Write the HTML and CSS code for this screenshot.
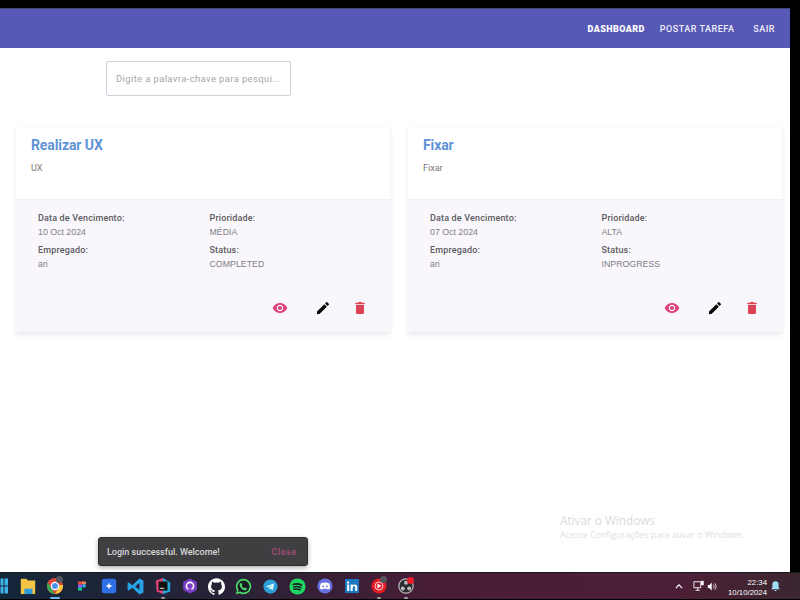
FILE: index.html
```html
<!DOCTYPE html>
<html lang="pt">
<head>
<meta charset="utf-8">
<title>Dashboard</title>
<link rel="stylesheet" href="styles.css">
</head>
<body>
<div class="window">
  <header class="navbar">
    <a class="nav-link nav-strong">DASHBOARD</a>
    <a class="nav-link">POSTAR TAREFA</a>
    <a class="nav-link">SAIR</a>
  </header>
  <main class="content">
    <div class="search"><span class="placeholder">Digite a palavra-chave para pesqui...</span></div>
    <section class="cards">
      <article class="card">
        <div class="card-head"><h2 class="card-title">Realizar UX</h2><p class="card-desc">UX</p></div>
        <div class="card-body">
          <dl class="meta">
            <div><dt>Data de Vencimento:</dt><dd>10 Oct 2024</dd></div>
            <div><dt>Prioridade:</dt><dd>MÉDIA</dd></div>
            <div><dt>Empregado:</dt><dd>ari</dd></div>
            <div><dt>Status:</dt><dd>COMPLETED</dd></div>
          </dl>
          <div class="actions">
            <svg class="icon icon-view" viewBox="0 0 24 24"><path d="M12 4.5C7 4.5 2.73 7.61 1 12c1.73 4.39 6 7.5 11 7.5s9.27-3.11 11-7.5c-1.73-4.39-6-7.5-11-7.5zM12 17c-2.76 0-5-2.24-5-5s2.24-5 5-5 5 2.24 5 5-2.24 5-5 5zm0-8c-1.66 0-3 1.34-3 3s1.34 3 3 3 3-1.34 3-3-1.34-3-3-3z"/></svg>
            <svg class="icon icon-edit" viewBox="0 0 24 24"><path d="M3 17.25V21h3.75L17.81 9.94l-3.75-3.75L3 17.25zM20.71 7.04c.39-.39.39-1.02 0-1.41l-2.34-2.34a.9959.9959 0 0 0-1.41 0l-1.83 1.83 3.75 3.75 1.83-1.83z"/></svg>
            <svg class="icon icon-del" viewBox="0 0 24 24"><path d="M6 19c0 1.1.9 2 2 2h8c1.1 0 2-.9 2-2V7H6v12zM19 4h-3.5l-1-1h-5l-1 1H5v2h14V4z"/></svg>
          </div>
        </div>
      </article>
      <article class="card">
        <div class="card-head"><h2 class="card-title">Fixar</h2><p class="card-desc">Fixar</p></div>
        <div class="card-body">
          <dl class="meta">
            <div><dt>Data de Vencimento:</dt><dd>07 Oct 2024</dd></div>
            <div><dt>Prioridade:</dt><dd>ALTA</dd></div>
            <div><dt>Empregado:</dt><dd>ari</dd></div>
            <div><dt>Status:</dt><dd>INPROGRESS</dd></div>
          </dl>
          <div class="actions">
            <svg class="icon icon-view" viewBox="0 0 24 24"><path d="M12 4.5C7 4.5 2.73 7.61 1 12c1.73 4.39 6 7.5 11 7.5s9.27-3.11 11-7.5c-1.73-4.39-6-7.5-11-7.5zM12 17c-2.76 0-5-2.24-5-5s2.24-5 5-5 5 2.24 5 5-2.24 5-5 5zm0-8c-1.66 0-3 1.34-3 3s1.34 3 3 3 3-1.34 3-3-1.34-3-3-3z"/></svg>
            <svg class="icon icon-edit" viewBox="0 0 24 24"><path d="M3 17.25V21h3.75L17.81 9.94l-3.75-3.75L3 17.25zM20.71 7.04c.39-.39.39-1.02 0-1.41l-2.34-2.34a.9959.9959 0 0 0-1.41 0l-1.83 1.83 3.75 3.75 1.83-1.83z"/></svg>
            <svg class="icon icon-del" viewBox="0 0 24 24"><path d="M6 19c0 1.1.9 2 2 2h8c1.1 0 2-.9 2-2V7H6v12zM19 4h-3.5l-1-1h-5l-1 1H5v2h14V4z"/></svg>
          </div>
        </div>
      </article>
    </section>
  </main>
  <div class="snackbar"><span>Login successful. Welcome!</span><span class="snack-close">Close</span></div>
  <div class="activate"><div class="activate-title">Ativar o Windows</div><div class="activate-sub">Acesse Configurações para ativar o Windows.</div></div>
</div>
<footer class="taskbar">
  <div class="apps">
    <span class="app app-start"><svg viewBox="0 0 20 20" width="20" height="20"><path fill="#3fb4ea" d="M9.500 2.500h3v7h-3zM13.500 2.500H17v7h-3.500zM9.500 10.500h3v7h-3zM13.500 10.500H17v7h-3.500z"/></svg></span>
    <span class="app"><svg viewBox="0 0 20 20" width="18" height="18"><path fill="#f4c542" d="M2 2h6l2 2h8v15H2z"/><path fill="#2f9bd8" d="M6 13h9v6H6z"/></svg></span>
    <span class="app app-on app-badge"><svg viewBox="0 0 20 20" width="18" height="18"><circle cx="10" cy="10" r="9" fill="#e2463a"/><path fill="#f6c63c" d="M19 10a9 9 0 0 1-9 9l4-7 1-3h3.600z"/><path fill="#3da755" d="M10 19a9 9 0 0 1-8-13l4.500 7z"/><circle cx="10" cy="10" r="4" fill="#4a8ef0" stroke="#fff" stroke-width="1.500"/></svg></span>
    <span class="app"><svg viewBox="0 0 20 20" width="10" height="16"><path fill="#e9503a" d="M2 1h8v6H2z"/><path fill="#f07f5a" d="M10 1h8v6h-8z"/><path fill="#a259ff" d="M2 7h8v6H2z"/><circle cx="14" cy="10" r="3.500" fill="#1abcfe"/><path fill="#0acf83" d="M2 13h8v6H2z"/></svg></span>
    <span class="app"><svg viewBox="0 0 20 20" width="18" height="18"><rect x="2" y="2" width="16" height="16" rx="3" fill="#2f6fe8"/><path fill="#fff" d="M10 6l1 3 3 1-3 1-1 3-1-3-3-1 3-1z"/></svg></span>
    <span class="app"><svg viewBox="0 0 24 24" width="19" height="19"><path fill="#2aa4e8" d="M17 2l5 2.500v15L17 22 8 13.500 3.500 17 2 16V8l1.500-1L8 10.500zM17 7.500L11.500 12l5.500 4.500z"/></svg></span>
    <span class="app app-dot"><svg viewBox="0 0 20 20" width="18" height="18"><path fill="#e0457b" d="M2 4l8-3v18l-7-3z"/><path fill="#27a7d8" d="M10 1l8 5v10l-8 3z"/><rect x="5" y="5" width="10" height="10" fill="#111"/><rect x="6.500" y="12" width="5" height="1" fill="#fff"/></svg></span>
    <span class="app"><svg viewBox="0 0 20 20" width="16" height="16"><path fill="#7b3fc7" d="M10 .5l8.500 4.500v10L10 19.500 1.500 15V5z"/><circle cx="10" cy="10" r="4.500" fill="none" stroke="#fff" stroke-width="2"/><path fill="#7b3fc7" d="M8 13h4v3H8z"/></svg></span>
    <span class="app"><svg viewBox="0 0 24 24" width="17" height="17"><path fill="#fff" d="M12 .5C5.400.5 0 5.900 0 12.500c0 5.300 3.400 9.800 8.200 11.400.6.100.8-.3.8-.6v-2.100c-3.300.7-4-1.600-4-1.600-.5-1.400-1.300-1.800-1.300-1.800-1.100-.7.100-.7.100-.7 1.200.1 1.800 1.200 1.800 1.200 1.100 1.800 2.800 1.300 3.500 1 .1-.8.400-1.300.8-1.600-2.700-.3-5.500-1.300-5.500-5.900 0-1.300.5-2.400 1.200-3.200-.1-.3-.5-1.500.1-3.200 0 0 1-.3 3.300 1.200a11.500 11.500 0 0 1 6 0c2.300-1.500 3.300-1.200 3.300-1.200.7 1.700.2 2.900.1 3.200.8.800 1.200 1.900 1.200 3.200 0 4.600-2.800 5.600-5.500 5.900.4.400.8 1.100.8 2.200v3.300c0 .3.200.7.800.6C20.600 22.300 24 17.800 24 12.500 24 5.900 18.600.5 12 .5z"/></svg></span>
    <span class="app"><svg viewBox="0 0 20 20" width="17" height="17"><path fill="#4ade6a" d="M10 1a9 9 0 0 0-7.700 13.600L1 19l4.500-1.200A9 9 0 1 0 10 1z"/><path fill="#1c1c24" d="M10 3a7 7 0 0 0-5.800 10.900l-.7 2.600 2.700-.7A7 7 0 1 0 10 3z"/><path fill="#4ade6a" d="M7 6c1 0 1.500 2 1.500 2.500L8 9.500c.5 1 1.500 2 2.500 2.500l1-.7c.5 0 2.500 1 2.500 1.700 0 1-1.500 1.500-2.500 1.500C9 14.500 5.500 11 5.500 8 5.500 7 6 6 7 6z"/></svg></span>
    <span class="app"><svg viewBox="0 0 20 20" width="15" height="15"><circle cx="10" cy="10" r="9.500" fill="#2d9fd9"/><path fill="#dff" d="M4 10l11-4.500-2 9.500-3-2.200-1.500 1.500-.3-2.500 4.800-4.300-6 3.700z"/></svg></span>
    <span class="app"><svg viewBox="0 0 20 20" width="17" height="17"><circle cx="10" cy="10" r="9.500" fill="#1fd760"/><path fill="none" stroke="#1c1c24" stroke-width="1.800" stroke-linecap="round" d="M5 7.500c3.500-1 7-.7 10 1M5.500 10.500c3-.8 6-.5 8.500 1M6 13.300c2.500-.6 4.800-.4 7 .8"/></svg></span>
    <span class="app"><svg viewBox="0 0 20 20" width="16" height="16"><circle cx="10" cy="10" r="9.500" fill="#6670e0"/><path fill="#fff" d="M5 6.500c3-1.300 7-1.300 10 0 1 2 1.500 4.500 1.300 6.500-1 .8-2 1.200-3 1.500l-.8-1.200h-5l-.8 1.200c-1-.3-2-.7-3-1.500C3.500 11 4 8.500 5 6.500z"/><circle cx="7.800" cy="10.500" r="1.200" fill="#6670e0"/><circle cx="12.200" cy="10.500" r="1.200" fill="#6670e0"/></svg></span>
    <span class="app"><svg viewBox="0 0 20 20" width="14" height="14"><rect width="20" height="20" fill="#1a78c2"/><path fill="#fff" d="M3 8h3v9H3zM3 3.500h3v3H3zM8 8h3v1.300c.6-1 1.700-1.500 3-1.500 2.500 0 3.500 1.500 3.500 4V17h-3v-4.500c0-1.300-.5-2-1.600-2-1.200 0-1.900.8-1.900 2.100V17H8z"/></svg></span>
    <span class="app app-dot app-badge"><svg viewBox="0 0 20 20" width="16" height="16"><circle cx="10" cy="10" r="9.500" fill="#e31b23"/><circle cx="10" cy="10" r="5" fill="none" stroke="#fff" stroke-width="1"/><path fill="#fff" d="M8 7l5 3-5 3z"/></svg></span>
    <span class="app app-dot app-obs"><svg viewBox="0 0 20 20" width="16" height="16"><circle cx="10" cy="10" r="9" fill="#2b2b30" stroke="#bbb" stroke-width="1.500"/><circle cx="10" cy="6" r="2.500" fill="#bbb"/><circle cx="6" cy="13" r="2.500" fill="#bbb"/><circle cx="14" cy="13" r="2.500" fill="#bbb"/></svg></span>
  </div>
  <div class="tray">
    <svg class="tray-chevron" viewBox="0 0 10 6" width="8" height="5"><path d="M1 5l4-4 4 4" fill="none" stroke="#fff" stroke-width="1.500"/></svg>
    <svg viewBox="0 0 14 14" width="12" height="12"><path d="M1 2h8v7H1zM3 12h5M5.500 9v3" fill="none" stroke="#fff"/><rect x="9.500" y="1" width="3" height="5" fill="#fff"/></svg>
    <svg class="tray-volume" viewBox="0 0 14 14" width="11" height="11"><path d="M1 5h2l3-3v10L3 9H1z" fill="#fff"/><path d="M8 4.500c1.200 1.500 1.200 3.500 0 5M10 3c2 2.200 2 5.800 0 8" fill="none" stroke="#fff"/></svg>
    <div class="clock"><div>22:34</div><div>10/10/2024</div></div>
    <svg viewBox="0 0 14 14" width="11" height="12"><path fill="#9fdcf5" d="M7 1a4 4 0 0 0-4 4v4L1.500 11h11L11 9V5a4 4 0 0 0-4-4zM5.500 12a1.500 1.500 0 0 0 3 0z"/></svg>
  </div>
</footer>
</body>
</html>
```
FILE: styles.css
```css
* { box-sizing: border-box; }
html, body { margin: 0; height: 100%; }
body {
  background: #000;
  padding-top: 8px;
  padding-bottom: 1px;
  display: flex;
  flex-direction: column;
  font-family: Roboto, "Liberation Sans", sans-serif;
  overflow: hidden;
}
.window {
  position: relative;
  flex: 1;
  width: 790px;
  background: #fff;
  display: flex;
  flex-direction: column;
}
.navbar {
  height: 40px;
  background: #5858b6;
  border-top: 1px solid #45457a;
  display: flex;
  justify-content: flex-end;
  align-items: center;
  gap: 15px;
  padding: 0 15px 0 0;
}
.nav-link {
  color: #eeeef8;
  font-size: 9px;
  font-weight: 500;
  letter-spacing: .5px;
}
.nav-strong { font-weight: 900; color: #fff; letter-spacing: .4px; }
.nav-link:last-child { margin-left: 4px; }
.content { padding: 13px 8px 0 16px; }
.search {
  margin-left: 90px;
  width: 185px;
  height: 35px;
  border: 1px solid #d0d0dc;
  border-radius: 2px;
  display: flex;
  align-items: center;
  padding-left: 9px;
}
.placeholder { font-size: 9.500px; letter-spacing: .36px; color: #a6a6ae; white-space: nowrap; }
.cards { display: flex; gap: 18px; margin-top: 31px; }
.card {
  width: 374px;
  box-shadow: 0 3px 4px rgba(60, 60, 80, .09), 0 0 6px rgba(60, 60, 80, .03);
}
.card-head { height: 72px; background: #fff; padding: 9px 15px 0; }
.card-title { margin: 0; font-size: 14px; line-height: 18px; font-weight: 700; letter-spacing: -.1px; color: #5f93d6; }
.card-desc { margin: 8px 0 0; font-size: 9px; line-height: 12px; color: #77777c; }
.card-body {
  height: 133px;
  background: #f9f7fb;
  border-top: 1px solid #f2f1f5;
  padding: 12px 0 0 22px;
  display: flex;
  flex-direction: column;
}
.meta {
  margin: 0;
  display: grid;
  grid-template-columns: 171.500px 1fr;
  row-gap: 6px;
}
.meta dt { font-size: 9px; line-height: 12px; font-weight: 500; letter-spacing: .16px; color: #5a5a60; }
.meta dd { margin: 3px 0 0; font-size: 8.800px; line-height: 11px; color: #7f7f84; font-family: "Liberation Sans", Arial, sans-serif; }
.actions {
  margin-top: auto;
  margin-bottom: 16px;
  padding-right: 22px;
  display: flex;
  justify-content: flex-end;
  gap: 21px;
}
.icon { width: 16px; height: 16px; display: block; }
.icon-view { fill: #de3f7d; }
.icon-edit { fill: #0a0a0a; margin-left: 6px; }
.icon-del { fill: #dc4455; }
.snackbar {
  position: absolute;
  left: 98px;
  top: 529px;
  width: 210px;
  height: 29px;
  background: #3f3f42;
  border: 1px solid #2d2d30;
  border-radius: 3px;
  box-shadow: 0 2px 5px rgba(0, 0, 0, .3);
  color: #d8d8d8;
  font-size: 9px;
  font-weight: 500;
  display: flex;
  align-items: center;
  justify-content: space-between;
  padding: 0 10px 0 8px;
}
.snack-close { color: #9c4a70; font-weight: 700; letter-spacing: .6px; }
.activate {
  position: absolute;
  left: 560px;
  top: 504px;
  font-family: "Open Sans", sans-serif;
}
.activate-title { font-size: 11.750px; line-height: 16px; color: #d9d9dd; }
.activate-sub { margin-top: 1px; font-size: 8.750px; line-height: 12px; color: #e0e0e4; }
.taskbar {
  height: 27px;
  flex: none;
  background: linear-gradient(90deg, #14263a 0%, #2a2236 30%, #4a1d36 55%, #4d1f36 85%, #3a2730 100%);
  border-top: 1px solid #1a1a22;
  display: flex;
  align-items: center;
  justify-content: space-between;
  padding-right: 19px;
}
.apps { display: flex; align-items: center; margin-left: -13px; }
.app {
  width: 27px;
  height: 26px;
  position: relative;
  display: flex;
  align-items: center;
  justify-content: center;
}
.app-on::after, .app-dot::after {
  content: "";
  position: absolute;
  bottom: 0;
  left: 50%;
  height: 2px;
  border-radius: 1px;
  background: #999;
  width: 4px;
  margin-left: -2px;
}
.app-on::after { width: 10px; margin-left: -5px; background: #6fb9e8; }
.app-badge::before, .app-obs::before {
  content: "";
  position: absolute;
  z-index: 1;
  top: 3px;
  right: 5px;
  width: 7px;
  height: 7px;
  border-radius: 50%;
  background: #55555c;
}
.app-obs::before { top: 4px; right: 5px; background: #e81c2c; }
.tray { display: flex; align-items: center; color: #fff; }
.tray-chevron { margin-right: 10px; }
.tray-volume { margin-left: 2px; }
.clock { margin: 0 3px 0 10px; padding-top: 4px; font-size: 7.800px; line-height: 10px; text-align: right; font-family: "Liberation Sans", sans-serif; }
```
